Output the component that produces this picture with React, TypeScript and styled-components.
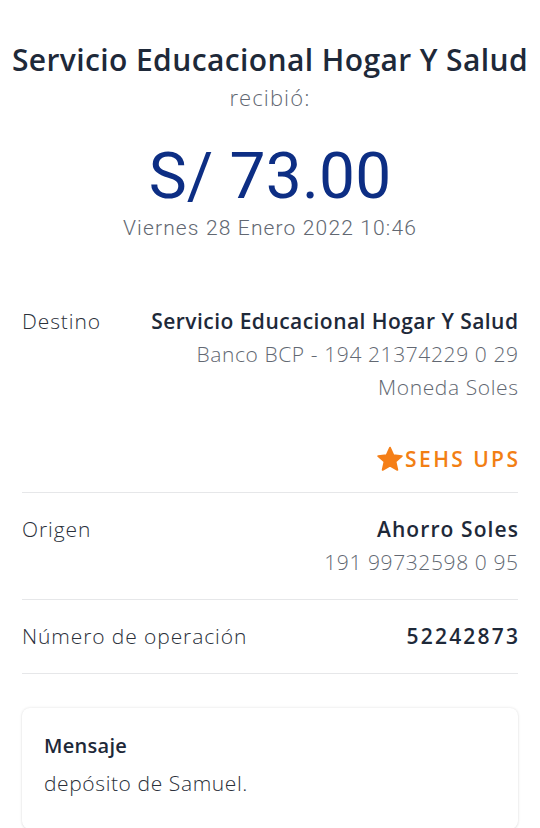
import * as React from "react";
import styled, { createGlobalStyle } from "styled-components";

const GlobalStyle = createGlobalStyle`
    html, body {
        margin: 0;
        padding: 0;
        background: #ffffff;
    }
    body {
        font-family: "Open Sans", "Noto Sans", "Liberation Sans", sans-serif;
        color: #1f2937;
        -webkit-font-smoothing: antialiased;
    }
`;

const Page = styled.div`
    width: 540px;
    height: 828px;
    overflow: hidden;
    box-sizing: border-box;
    padding: 0 22px;
`;

const Header = styled.header`
    display: flex;
    flex-direction: column;
    align-items: center;
    padding-top: 40px;
    padding-bottom: 63px;
`;

const Title = styled.h1`
    margin: 0;
    font-size: 30px;
    font-weight: 600;
    line-height: 40px;
    letter-spacing: 0.4px;
    color: #1e2939;
    white-space: nowrap;
`;

const Received = styled.div`
    font-size: 22px;
    font-weight: 300;
    line-height: 34px;
    letter-spacing: 1.1px;
    color: #626872;
`;

const Amount = styled.div`
    margin-top: 27px;
    font-family: Roboto, "Open Sans", sans-serif;
    font-size: 64px;
    font-weight: 400;
    line-height: 72px;
    letter-spacing: 0.2px;
    color: #0d2e84;
`;

const DateText = styled.div`
    margin-top: 1px;
    font-family: Roboto, "Open Sans", sans-serif;
    font-size: 21px;
    font-weight: 300;
    line-height: 28px;
    letter-spacing: 1.15px;
    color: #626872;
`;

const Section = styled.section`
    display: flex;
    justify-content: space-between;
    align-items: flex-start;
    padding: 20px 0;
    border-bottom: 1px solid #e6e7e9;
`;

const FirstSection = styled(Section)`
    padding-top: 0;
    padding-bottom: 16px;
`;

const Label = styled.div`
    font-size: 21px;
    font-weight: 300;
    line-height: 33px;
    letter-spacing: 0.9px;
    color: #2a303a;
    white-space: nowrap;
`;

const Values = styled.div`
    display: flex;
    flex-direction: column;
    align-items: flex-end;
    text-align: right;
`;

const Strong = styled.div<{ $spacing?: number }>`
    font-size: 21px;
    font-weight: 600;
    line-height: 33px;
    letter-spacing: ${p => p.$spacing ?? 0.45}px;
    margin-right: -${p => p.$spacing ?? 0.45}px;
    color: #1e2939;
    white-space: nowrap;
`;

const Muted = styled.div`
    font-size: 21px;
    font-weight: 300;
    line-height: 33px;
    letter-spacing: 0.6px;
    margin-right: -0.6px;
    color: #626872;
    white-space: nowrap;
`;

const Favorite = styled.div`
    display: flex;
    align-items: center;
    gap: 0;
    margin-top: 39px;
    margin-right: -2.4px;
    font-size: 21px;
    font-weight: 600;
    line-height: 33px;
    letter-spacing: 2.4px;
    color: #f27f14;
`;

const MessageCard = styled.div`
    margin-top: 34px;
    padding: 21px 22px 26px;
    border-radius: 8px;
    background: #ffffff;
    box-shadow: 0 0 3px rgba(0, 0, 0, 0.12), 0 1px 2px rgba(0, 0, 0, 0.06);
`;

const MessageTitle = styled.div`
    font-size: 20px;
    font-weight: 600;
    line-height: 34px;
    letter-spacing: 0.3px;
    color: #1e2939;
`;

const MessageBody = styled.div`
    font-size: 21px;
    font-weight: 300;
    line-height: 40px;
    letter-spacing: 0.6px;
    color: #2a303a;
`;

const Star = () => (
    <svg width="30" height="29" viewBox="0 0 24 24" aria-hidden="true">
        <path
            fill="#f57f17"
            stroke="#f57f17"
            strokeWidth="1.5"
            strokeLinejoin="round"
            d="M12 2.2l2.9 6.3 6.9.7-5.2 4.6 1.5 6.8L12 17.1l-6.1 3.5 1.5-6.8-5.2-4.6 6.9-.7z"
        />
    </svg>
);

export default function App() {
    return (
        <>
            <GlobalStyle />
            <Page>
                <Header>
                    <Title>Servicio Educacional Hogar Y Salud</Title>
                    <Received>recibió:</Received>
                    <Amount>S/ 73.00</Amount>
                    <DateText>Viernes 28 Enero 2022 10:46</DateText>
                </Header>

                <FirstSection>
                    <Label>Destino</Label>
                    <Values>
                        <Strong>Servicio Educacional Hogar Y Salud</Strong>
                        <Muted>Banco BCP - 194 21374229 0 29</Muted>
                        <Muted>Moneda Soles</Muted>
                        <Favorite><Star />SEHS UPS</Favorite>
                    </Values>
                </FirstSection>

                <Section>
                    <Label>Origen</Label>
                    <Values>
                        <Strong $spacing={1.1}>Ahorro Soles</Strong>
                        <Muted>191 99732598 0 95</Muted>
                    </Values>
                </Section>

                <Section>
                    <Label>Número de operación</Label>
                    <Values>
                        <Strong $spacing={2.2}>52242873</Strong>
                    </Values>
                </Section>

                <MessageCard>
                    <MessageTitle>Mensaje</MessageTitle>
                    <MessageBody>depósito de Samuel.</MessageBody>
                </MessageCard>
            </Page>
        </>
    );
}
